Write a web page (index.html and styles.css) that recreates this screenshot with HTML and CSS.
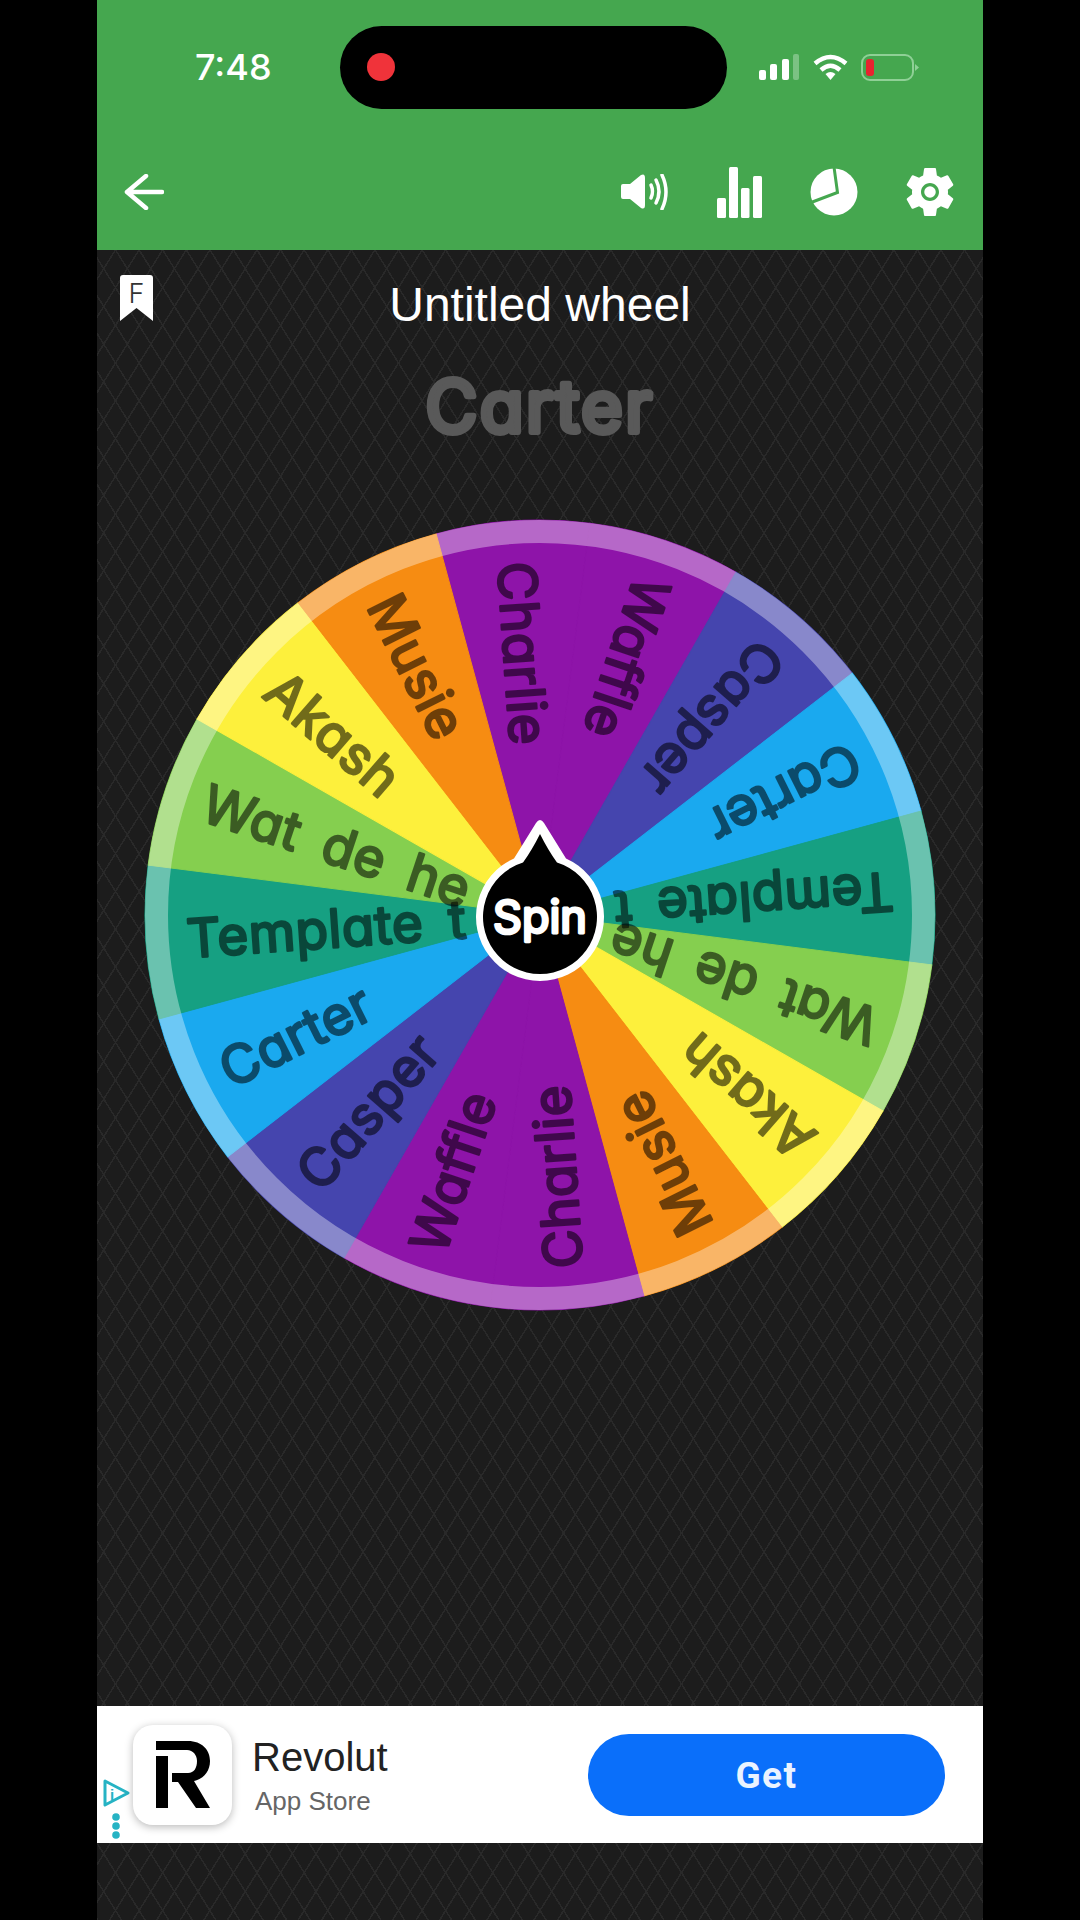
FILE: index.html
```html
<!DOCTYPE html>
<html lang="en">
<head>
<meta charset="utf-8">
<title>Untitled wheel</title>
<link rel="stylesheet" href="styles.css">
</head>
<body>
<div class="phone">
  <header class="header">
    <div class="status">
      <div class="time">7:48</div>
      <div class="island"><span class="rec"></span></div>
      <svg class="signal" viewBox="0 0 40 26" width="40" height="26"><rect class="w" x="0" y="16" width="7" height="10" rx="2"/><rect class="w" x="11" y="10" width="7" height="16" rx="2"/><rect class="w" x="23" y="5" width="7" height="21" rx="2"/><rect class="dim" x="34" y="0" width="6" height="26" rx="2"/></svg>
      <svg class="wifi" viewBox="0 0 35 26" width="35" height="26"><path class="arc" d="M2 9.5Q17.5 -3.5 33 9.5"/><path class="arc" d="M8 16Q17.5 7.5 27 16"/><path class="w" d="M12.5 20Q17.5 16 22.5 20L17.5 26Z"/></svg>
      <svg class="battery" viewBox="0 0 58 27" width="58" height="27"><rect class="batt" x="1" y="1" width="51" height="25" rx="8"/><rect class="red" x="5" y="5" width="8" height="17" rx="3"/><path class="nub" d="M54 10L58 13.5L54 17Z"/></svg>
    </div>
    <div class="toolbar">
      <svg class="back" viewBox="0 0 40 36" width="40" height="36"><path class="line" d="M38 18H3M22 2L3 18L22 34"/></svg>
      <div class="tools">
        <svg viewBox="0 0 48 36" width="48" height="36"><path class="w" d="M2 10H9L20 1Q24 -1 24 4V31Q24 36 20 34L9 25H2Q0 25 0 23V12Q0 10 2 10Z"/><path class="arc3" d="M30 11Q33 17.5 30 24"/><path class="arc3" d="M35 6Q41 17.5 35 29"/><path class="arc3" d="M41 1Q49 18 41 35"/></svg>
        <svg viewBox="0 0 45 51" width="45" height="51"><rect class="w" x="0" y="31" width="9" height="20" rx="1.5"/><rect class="w" x="12" y="0" width="9" height="51" rx="1.5"/><rect class="w" x="24" y="21" width="8.500" height="30" rx="1.5"/><rect class="w" x="36" y="9" width="9" height="42" rx="1.5"/></svg>
        <svg viewBox="0 0 48 48" width="48" height="48"><circle class="w" cx="24" cy="24" r="23.500"/><path class="gap" d="M1 34.500L27.500 24.500L24 -1"/></svg>
        <svg viewBox="2.600 2 18.800 20" width="48" height="50"><path class="w" d="M19.140 12.940c.04-.3.06-.61.06-.94 0-.32-.02-.64-.07-.94l2.030-1.580c.18-.14.23-.41.12-.61l-1.920-3.320c-.12-.22-.37-.29-.59-.22l-2.390.96c-.5-.38-1.030-.7-1.620-.94l-.36-2.540c-.04-.24-.24-.41-.48-.41h-3.840c-.24 0-.43.17-.47.41l-.36 2.540c-.59.24-1.130.57-1.620.94l-2.390-.96c-.22-.08-.47 0-.59.22L2.740 8.870c-.12.21-.08.47.12.61l2.030 1.580c-.05.3-.09.63-.09.94s.02.64.07.94l-2.030 1.580c-.18.14-.23.41-.12.61l1.920 3.320c.12.22.37.29.59.22l2.390-.96c.5.38 1.030.7 1.620.94l.36 2.540c.05.24.24.41.48.41h3.840c.24 0 .44-.17.47-.41l.36-2.540c.59-.24 1.130-.56 1.620-.94l2.390.96c.22.08.47 0 .59-.22l1.920-3.320c.12-.22.07-.47-.12-.61l-2.010-1.580zM12 15.600c-1.980 0-3.600-1.620-3.600-3.600s1.620-3.600 3.600-3.600 3.600 1.620 3.600 3.600-1.620 3.600-3.600 3.600z"/><circle class="w" cx="12" cy="12" r="2.300"/></svg>
      </div>
    </div>
  </header>

  <main class="main">
    <svg class="bookmark" viewBox="0 0 33 46" width="33" height="46"><path class="w" d="M3 0H30Q33 0 33 3V46L16.500 33L0 46V3Q0 0 3 0Z"/><text class="f" x="16.500" y="28" text-anchor="middle">F</text></svg>
    <h1 class="title">Untitled wheel</h1>
    <svg class="winner" viewBox="0 0 320 120" width="320" height="120"><text x="160" y="86" text-anchor="middle">Carter</text></svg>
    <svg class="wheel" viewBox="-400 -400 800 800" width="800" height="800">
      <defs><path id="wedge" d="M0 0L-77.060 -387.410A395 395 0 0 1 77.060 -387.410Z"/></defs>
      <g>
        <use href="#wedge" class="purple" transform="rotate(-4)"/>
        <use href="#wedge" class="purple" transform="rotate(18.500)"/>
        <use href="#wedge" class="indigo" transform="rotate(41)"/>
        <use href="#wedge" class="blue" transform="rotate(63.500)"/>
        <use href="#wedge" class="teal" transform="rotate(86)"/>
        <use href="#wedge" class="green" transform="rotate(108.500)"/>
        <use href="#wedge" class="yellow" transform="rotate(131)"/>
        <use href="#wedge" class="orange" transform="rotate(153.500)"/>
        <use href="#wedge" class="purple" transform="rotate(176)"/>
        <use href="#wedge" class="purple" transform="rotate(198.500)"/>
        <use href="#wedge" class="indigo" transform="rotate(221)"/>
        <use href="#wedge" class="blue" transform="rotate(243.500)"/>
        <use href="#wedge" class="teal" transform="rotate(266)"/>
        <use href="#wedge" class="green" transform="rotate(288.500)"/>
        <use href="#wedge" class="yellow" transform="rotate(311)"/>
        <use href="#wedge" class="orange" transform="rotate(333.500)"/>
      </g>
      <circle class="rim" r="383.500"/>
      <g class="labels">
        <text x="-354" y="18" transform="rotate(86)">Charlie</text>
        <text x="-354" y="18" transform="rotate(108.500)">Waffle</text>
        <text x="-354" y="18" transform="rotate(131)">Casper</text>
        <text x="-354" y="18" transform="rotate(153.500)">Carter</text>
        <text x="-354" y="18" transform="rotate(176)">Template t</text>
        <text x="-354" y="18" transform="rotate(198.500)">Wat de he</text>
        <text x="-354" y="18" transform="rotate(221)">Akash</text>
        <text x="-354" y="18" transform="rotate(243.500)">Musie</text>
        <text x="-354" y="18" transform="rotate(266)">Charlie</text>
        <text x="-354" y="18" transform="rotate(288.500)">Waffle</text>
        <text x="-354" y="18" transform="rotate(311)">Casper</text>
        <text x="-354" y="18" transform="rotate(333.500)">Carter</text>
        <text x="-354" y="18" transform="rotate(356)">Template t</text>
        <text x="-354" y="18" transform="rotate(18.500)">Wat de he</text>
        <text x="-354" y="18" transform="rotate(41)">Akash</text>
        <text x="-354" y="18" transform="rotate(63.500)">Musie</text>
      </g>
      <g transform="translate(0 2)">
        <path class="w" d="M-4 -94Q0 -100 4 -94L26 -58.500A64 64 0 1 1 -26 -58.500Z"/>
        <path class="k" d="M0 -83Q8 -67 17 -54.400A57 57 0 1 1 -17 -54.400Q-8 -67 0 -83Z"/>
        <text class="spin" x="0" y="16" text-anchor="middle">Spin</text>
      </g>
    </svg>
  </main>

  <section class="ad">
    <svg class="adchoice" viewBox="0 0 28 62" width="28" height="62"><path class="tri" d="M2 2L25 14L2 26Z"/><text class="adi" x="9" y="21" text-anchor="middle">i</text><circle class="dot" cx="13" cy="38" r="3.800"/><circle class="dot" cx="13" cy="47" r="3.800"/><circle class="dot" cx="13" cy="56" r="3.800"/></svg>
    <div class="appicon">
      <svg viewBox="0 0 54 67" width="54" height="67"><path class="k" d="M0 0H32C46 0 54 9 54 20C54 31 47 38 38 40L54 67H40L22 41H16V32H32C38 32 41 27 41 20C41 14 37 9 31 9H0Z"/><rect class="k" x="0" y="15" width="12" height="52"/></svg>
    </div>
    <div class="appinfo">
      <div class="appname">Revolut</div>
      <div class="appstore">App Store</div>
    </div>
    <div class="get">Get</div>
  </section>
  <div class="foot"></div>
</div>
</body>
</html>
```
FILE: styles.css
```css
html, body { margin: 0; padding: 0; background: #000; }
body { width: 1080px; height: 1920px; overflow: hidden; font-family: "Liberation Sans", sans-serif; }
.phone {
  width: 886px; height: 1920px; margin-left: 97px;
  display: flex; flex-direction: column;
  background-color: #1c1c1c;
  background-image:
    repeating-linear-gradient(58deg, #292929 0 1.5px, transparent 1.5px 20px),
    repeating-linear-gradient(-58deg, #292929 0 1.5px, transparent 1.5px 20px);
}
.w { fill: #fff; }
.k { fill: #000; }

.header { height: 250px; flex: none; background: #45a74f; }
.status { height: 134px; display: flex; align-items: center; padding-left: 98px; }
.time { width: 145px; color: #fff; font: 500 36px "Inter", sans-serif; }
.island { width: 387px; height: 83px; border-radius: 42px; background: #000; display: flex; align-items: center; padding-left: 27px; box-sizing: border-box; }
.rec { width: 28px; height: 28px; border-radius: 50%; background: #f0333a; }
.signal { margin-left: 32px; }
.dim { fill: #7cc283; }
.wifi { margin-left: 14px; }
.arc { fill: none; stroke: #fff; stroke-width: 4.5; stroke-linecap: butt; }
.battery { margin-left: 13px; }
.batt { fill: none; stroke: #8fd096; stroke-width: 2; }
.red { fill: #e8232f; }
.nub { fill: #8fd096; }

.toolbar { height: 116px; display: flex; align-items: center; justify-content: space-between; padding: 0 29px 0 27px; }
.back { display: block; }
.line { fill: none; stroke: #fff; stroke-width: 4.5; stroke-linecap: round; stroke-linejoin: round; }
.tools { display: flex; align-items: center; gap: 48px; }
.arc3 { fill: none; stroke: #fff; stroke-width: 3.5; stroke-linecap: round; }
.gap { fill: none; stroke: #45a74f; stroke-width: 3; }

.main { position: relative; flex: 1; display: flex; flex-direction: column; align-items: center; }
.bookmark { position: absolute; left: 23px; top: 25px; }
.f { font: 300 27px "Inter", sans-serif; fill: #333; }
.title { margin: 27px 0 0; height: 56px; font: 400 48px/56px "Liberation Sans", sans-serif; color: #fff; }
.winner { display: block; flex: none; margin-top: 13px; }
.winner text { font: 400 71px "Inter", sans-serif; font-feature-settings: "cv11"; letter-spacing: 2.5px; fill: #595959; stroke: #595959; stroke-width: 6; stroke-linejoin: round; }
.wheel { display: block; margin-top: 49px; flex: none; }

.purple { fill: #8e14a9; stroke: #8e14a9; }
.indigo { fill: #4545ae; stroke: #4545ae; }
.blue { fill: #1aa9ef; stroke: #1aa9ef; }
.teal { fill: #16a082; stroke: #16a082; }
.green { fill: #85cf4f; stroke: #85cf4f; }
.yellow { fill: #fdf03c; stroke: #fdf03c; }
.orange { fill: #f68c12; stroke: #f68c12; }
.rim { fill: none; stroke: #fff; stroke-opacity: .36; stroke-width: 23; }

.labels text {
  font: 400 53px "Inter", sans-serif;
  font-feature-settings: "cv11";
  letter-spacing: .5px;
  word-spacing: 10px;
  fill: #000; stroke: #000; stroke-width: 2.5; stroke-linejoin: round; stroke-linecap: round;
  opacity: .55;
}
.spin { font: 400 45px "Inter", sans-serif; font-feature-settings: "cv11"; fill: #fff; stroke: #fff; stroke-width: 3; stroke-linejoin: round; }

.ad { position: relative; height: 137px; flex: none; background: #fff; display: flex; align-items: center; }
.adchoice { flex: none; margin: 70px 0 0 6px; }
.tri { fill: none; stroke: #26b3c4; stroke-width: 3; stroke-linejoin: round; }
.adi { font: 700 15px "Liberation Sans", sans-serif; fill: #26b3c4; }
.dot { fill: #26b3c4; }
.appicon { flex: none; margin-left: 2px; width: 99px; height: 100px; border-radius: 20px; background: #fff; box-shadow: 0 2px 8px rgba(0,0,0,.28); display: flex; align-items: center; justify-content: center; }
.appicon svg { display: block; }
.appinfo { flex: none; width: 336px; margin-left: 20px; }
.appname { font: 400 40px/46px "Liberation Sans", sans-serif; color: #222; }
.appstore { margin: 6px 0 0 3px; font: 400 26px/30px "Liberation Sans", sans-serif; color: #666; }
.get { flex: none; width: 357px; height: 82px; border-radius: 41px; background: #0a6ffa; color: #eaf3ff; font: 700 37px/84px "Roboto", sans-serif; letter-spacing: 1.5px; text-align: center; }
.foot { height: 77px; flex: none; }
```
